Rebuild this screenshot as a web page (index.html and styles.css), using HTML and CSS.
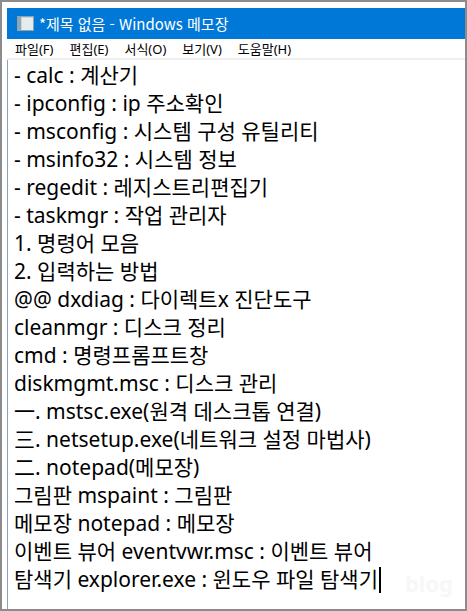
FILE: index.html
```html
<!DOCTYPE html>
<html lang="ko">
<head>
<meta charset="utf-8">
<link rel="stylesheet" href="styles.css">
</head>
<body>
<div class="window">
  <div class="titlebar">
    <svg class="app-icon" width="17" height="15" viewBox="0 0 17 15">
      <rect x="0.5" y="0.5" width="16" height="14" fill="#c9d6dd" stroke="#8fa3ad"/>
      <rect x="1" y="1" width="3" height="13" fill="#8fa8b4"/>
      <rect x="5" y="2" width="11" height="12" fill="#e4ecef"/>
    </svg>
    <span class="title">*제목 없음 - Windows 메모장</span>
  </div>
  <div class="menubar">
    <span class="menu-item">파일(F)</span>
    <span class="menu-item">편집(E)</span>
    <span class="menu-item">서식(O)</span>
    <span class="menu-item">보기(V)</span>
    <span class="menu-item">도움말(H)</span>
  </div>
  <div class="editor">
    <div class="line">- calc : 계산기</div>
    <div class="line">- ipconfig : ip 주소확인</div>
    <div class="line">- msconfig : 시스템 구성 유틸리티</div>
    <div class="line">- msinfo32 : 시스템 정보</div>
    <div class="line">- regedit : 레지스트리편집기</div>
    <div class="line">- taskmgr : 작업 관리자</div>
    <div class="line">1. 명령어 모음</div>
    <div class="line">2. 입력하는 방법</div>
    <div class="line">@@ dxdiag : 다이렉트x 진단도구</div>
    <div class="line">cleanmgr : 디스크 정리</div>
    <div class="line">cmd : 명령프롬프트창</div>
    <div class="line">diskmgmt.msc : 디스크 관리</div>
    <div class="line">一. mstsc.exe(원격 데스크톱 연결)</div>
    <div class="line">三. netsetup.exe(네트워크 설정 마법사)</div>
    <div class="line">二. notepad(메모장)</div>
    <div class="line">그림판 mspaint : 그림판</div>
    <div class="line">메모장 notepad : 메모장</div>
    <div class="line">이벤트 뷰어 eventvwr.msc : 이벤트 뷰어</div>
    <div class="line">탐색기 explorer.exe : 윈도우 파일 탐색기<span class="caret"></span></div>
    <span class="watermark">blog</span>
  </div>
</div>
</body>
</html>
```
FILE: styles.css
```css
html, body {
  margin: 0;
  padding: 0;
  background: #ffffff;
}
.window {
  width: 467px;
  height: 611px;
  box-sizing: border-box;
  border: 2px solid #8c8c8c;
  padding: 6px 0 0 5px;
  display: flex;
  flex-direction: column;
  background: #ffffff;
}
.titlebar {
  height: 31px;
  background: #0078d7;
  display: flex;
  align-items: center;
  padding-left: 10px;
  flex: none;
}
.app-icon {
  display: block;
  margin-right: 5px;
}
.title {
  color: #ffffff;
  font-family: "Noto Sans CJK KR", "Noto Sans", sans-serif;
  font-size: 15px;
  line-height: 1;
}
.menubar {
  height: 19px;
  display: flex;
  align-items: center;
  gap: 16px;
  padding-left: 8px;
  border-bottom: 2px solid #f0f0f0;
  flex: none;
  font-family: "Noto Sans", "Noto Sans CJK KR", sans-serif;
  font-size: 13px;
  color: #000000;
}
.editor {
  flex: 1;
  position: relative;
  border-left: 1px solid #8aa2c2;
  padding: 1px 0 0 6px;
  font-family: "Noto Sans", "Noto Sans CJK KR", sans-serif;
  font-size: 21px;
  line-height: 28px;
  color: #000000;
  overflow: hidden;
}
.line {
  white-space: pre;
}
.caret {
  display: inline-block;
  width: 2px;
  height: 26px;
  background: #000000;
  vertical-align: -6px;
  margin-left: 1px;
}
.watermark {
  position: absolute;
  right: 12px;
  bottom: 12px;
  font-family: "Noto Sans", sans-serif;
  font-weight: 700;
  font-size: 22px;
  color: #f7f7f7;
}
```
